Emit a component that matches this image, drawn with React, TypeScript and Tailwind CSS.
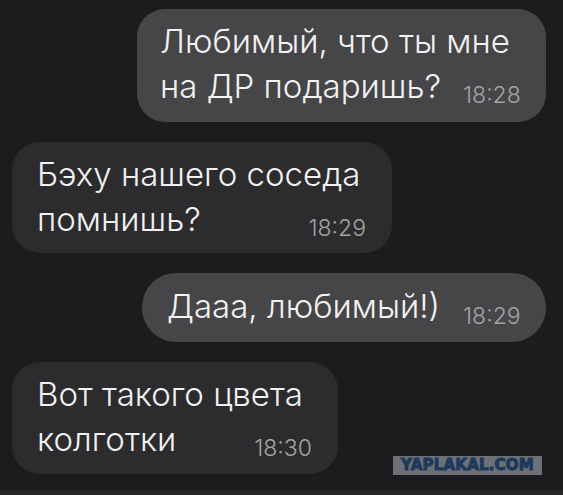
import React from "react";

const font = { fontFamily: "Inter, 'Liberation Sans', sans-serif" };

export default function App() {
  return (
    <div className="relative w-[563px] h-[495px] bg-[#1c1c1e] overflow-hidden" style={font}>
      <div className="flex flex-col pt-[9px] gap-[20px]">
        <div className="flex justify-end pr-[17px]">
          <div className="w-[409px] h-[113px] rounded-[28px] bg-[#464648] pl-[23px] pt-[10px] text-[#f2f2f2] text-[33px] leading-[45px] font-light">
            <div>Любимый, что ты мне</div>
            <div className="flex items-baseline">
              <span>на ДР подаришь?</span>
              <span className="ml-[22px] text-[23px] text-[#a3a3a5] translate-y-[5px]">18:28</span>
            </div>
          </div>
        </div>
        <div className="flex justify-start pl-[12px]">
          <div className="w-[380px] h-[111px] rounded-[28px] bg-[#2c2c2e] pl-[25px] pt-[10px] text-[#f2f2f2] text-[33px] leading-[45px] font-light">
            <div>Бэху нашего соседа</div>
            <div className="flex items-baseline">
              <span>помнишь?</span>
              <span className="ml-auto mr-[26px] text-[23px] text-[#a3a3a5] translate-y-[5px]">18:29</span>
            </div>
          </div>
        </div>
        <div className="flex justify-end pr-[17px]">
          <div className="w-[404px] h-[69px] rounded-[34px] bg-[#464648] pl-[25px] pt-[11px] text-[#f2f2f2] text-[33px] leading-[44px] font-light">
            <div className="flex items-baseline">
              <span>Дааа, любимый!)</span>
              <span className="ml-[23px] text-[23px] text-[#a3a3a5] translate-y-[6px]">18:29</span>
            </div>
          </div>
        </div>
        <div className="flex justify-start pl-[12px]">
          <div className="w-[326px] h-[112px] rounded-[28px] bg-[#2c2c2e] pl-[25px] pt-[10px] text-[#f2f2f2] text-[33px] leading-[45px] font-light">
            <div>Вот такого цвета</div>
            <div className="flex items-baseline">
              <span>колготки</span>
              <span className="ml-auto mr-[26px] text-[23px] text-[#a3a3a5] translate-y-[5px]">18:30</span>
            </div>
          </div>
        </div>
      </div>
      <div
        className="absolute left-[393px] top-[456px] w-[149px] h-[19px] bg-[#6d7075] flex items-center justify-center text-[#1d3a5c] text-[15px] font-black tracking-[0.2px] [-webkit-text-stroke:1px_#1d3a5c]"
        style={{ fontFamily: "'DejaVu Sans', sans-serif" }}
      >
        YAPLAKAL.COM
      </div>
      <div className="absolute left-0 bottom-0 w-full h-[5px] bg-[#252527]" />
    </div>
  );
}
